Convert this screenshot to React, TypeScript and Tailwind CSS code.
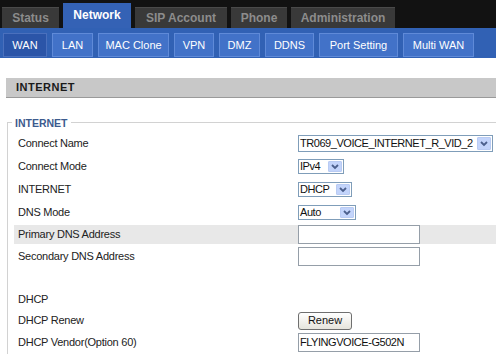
import React from "react";

const topTabs = [
  { label: "Status", w: "w-[57px]", active: false },
  { label: "Network", w: "w-[68px]", active: true },
  { label: "SIP Account", w: "w-[92px]", active: false },
  { label: "Phone", w: "w-[56px]", active: false },
  { label: "Administration", w: "w-[104px]", active: false },
];

const subTabs = [
  { label: "WAN", w: "w-[44px]", active: true },
  { label: "LAN", w: "w-[41px]", active: false },
  { label: "MAC Clone", w: "w-[71px]", active: false },
  { label: "VPN", w: "w-[40px]", active: false },
  { label: "DMZ", w: "w-[41px]", active: false },
  { label: "DDNS", w: "w-[49px]", active: false },
  { label: "Port Setting", w: "w-[79px]", active: false },
  { label: "Multi WAN", w: "w-[71px]", active: false },
];

function Arrow({ h }: { h: string }) {
  return (
    <span
      className={`flex ${h} w-[14px] mr-[1px] shrink-0 items-center justify-center rounded-[1px] border border-[#b9cbf3] bg-[#c3d4fb]`}
    >
      <svg width="8" height="6" viewBox="0 0 8 6">
        <path d="M1 1 L4 4 L7 1" fill="none" stroke="#4b5f8c" strokeWidth="1.8" />
      </svg>
    </span>
  );
}

function Sel({ text, w, h, ah }: { text: string; w: string; h: string; ah: string }) {
  return (
    <div className={`flex ${w} ${h} items-center border border-[#7f9db9] bg-white`}>
      <span className="flex-1 overflow-hidden whitespace-nowrap pl-[1px] text-[11px] leading-none tracking-[-0.45px] text-[#111]">
        {text}
      </span>
      <Arrow h={ah} />
    </div>
  );
}

function Input({ value }: { value?: string }) {
  return (
    <div className="flex h-[19px] w-[122px] items-center border border-[#959ea8] bg-white pl-[1px] text-[11px] leading-none tracking-[-0.45px] text-[#111]">
      {value}
    </div>
  );
}

function Row({
  label,
  h,
  gray,
  children,
  extra,
}: {
  label: string;
  h: string;
  gray?: boolean;
  children?: React.ReactNode;
  extra?: string;
}) {
  return (
    <div className={`flex ${h} items-center ${gray ? "bg-[#e8e8e8]" : ""} ${extra ?? ""}`}>
      <div className="w-[284px] shrink-0 pl-[4px] text-[11px] leading-none tracking-[-0.25px] text-[#222]">
        {label}
      </div>
      <div className="flex items-center">{children}</div>
    </div>
  );
}

export default function App() {
  return (
    <div className="relative h-[355px] w-[496px] overflow-hidden bg-white font-['Liberation_Sans',Arial,sans-serif]">
      {/* top tabs */}
      <div className="flex h-[28px] items-end gap-[4px] bg-[#121212] pl-[2px]">
        {topTabs.map((t) =>
          t.active ? (
            <div
              key={t.label}
              className={`flex h-[25px] ${t.w} items-center justify-center bg-[#3462b5] pb-[1px] text-[12px] font-bold text-white`}
            >
              {t.label}
            </div>
          ) : (
            <div
              key={t.label}
              className={`flex h-[21px] ${t.w} items-center justify-center border-t border-[#4a4a4a] bg-[#393939] text-[12px] font-bold text-[#8c8c8c]`}
            >
              {t.label}
            </div>
          )
        )}
      </div>
      {/* sub tabs */}
      <div className="flex h-[30px] items-start gap-[5px] bg-[#3161b4] pl-[3px] pt-[5px]">
        {subTabs.map((t) => (
          <div
            key={t.label}
            className={`flex h-[24px] ${t.w} items-center justify-center border text-[11px] text-white ${
              t.active ? "border-[#4a70bd] bg-[#2b55a8]" : "border-[#5f8ad8] bg-[#4272c8]"
            }`}
          >
            {t.label}
          </div>
        ))}
      </div>
      {/* header bar */}
      <div className="ml-[6px] mt-[20px] flex h-[20px] items-center border-b border-[#9a9a9a] bg-[#c8c8c8] pl-[10px] text-[11px] font-bold tracking-[0.5px] text-[#1a1a1a]">
        INTERNET
      </div>
      {/* fieldset */}
      <div className="relative ml-[7px] mt-[24px] border-l border-t border-[#d2d2d2] pl-[6px] pt-[9px]">
        <span className="absolute left-[4px] top-[-6px] bg-white px-[3px] text-[10.5px] font-bold leading-[12px] text-[#3d5b8e]">
          INTERNET
        </span>
        <Row label="Connect Name" h="h-[23px]">
          <Sel text="TR069_VOICE_INTERNET_R_VID_2" w="w-[195px]" h="h-[17px]" ah="h-[13px]" />
        </Row>
        <Row label="Connect Mode" h="h-[23px]">
          <Sel text="IPv4" w="w-[46px]" h="h-[15px]" ah="h-[11px]" />
        </Row>
        <Row label="INTERNET" h="h-[23px]">
          <Sel text="DHCP" w="w-[54px]" h="h-[15px]" ah="h-[11px]" />
        </Row>
        <Row label="DNS Mode" h="h-[23px]">
          <Sel text="Auto" w="w-[58px]" h="h-[15px]" ah="h-[11px]" />
        </Row>
        <Row label="Primary DNS Address" h="h-[19px]" gray extra="mt-[1px] mb-[1px]">
          <Input />
        </Row>
        <Row label="Secondary DNS Address" h="h-[23px]">
          <Input />
        </Row>
        <div className="h-[21px]" />
        <Row label="DHCP" h="h-[21px]" />
        <Row label="DHCP Renew" h="h-[21px]">
          <button className="flex h-[18px] w-[54px] items-center justify-center rounded-[3px] border border-[#6f6f6f] bg-gradient-to-b from-white to-[#e6e4dc] text-[11px] leading-none text-[#111]">
            Renew
          </button>
        </Row>
        <Row label="DHCP Vendor(Option 60)" h="h-[23px]">
          <Input value="FLYINGVOICE-G502N" />
        </Row>
      </div>
    </div>
  );
}
